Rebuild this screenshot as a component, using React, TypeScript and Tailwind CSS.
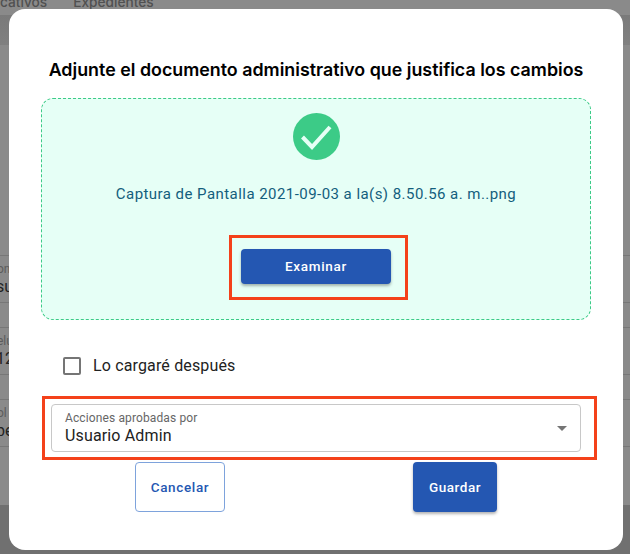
const inter = { fontFamily: 'Inter, sans-serif' };

const rows = [
  { label: 'on', value: 'su' },
  { label: 'elu', value: '12' },
  { label: 'ol', value: 'be' },
];

function BackgroundPage() {
  return (
    <div className="absolute inset-0 bg-[#8a8a8a] font-['Inter',sans-serif]">
      <div className="flex h-[15px] items-start gap-[26px] text-[13.7px] font-medium leading-[15px] text-[#505050]">
        <span className="-mt-[5px]">cativos</span>
        <span className="-mt-[5px]">Expedientes</span>
      </div>
      <div className="h-[30px] bg-gradient-to-b from-[#7a7a7a] to-[#808080]" />
      <div className="mt-[210px] flex flex-col gap-[24px] font-['Roboto',sans-serif]">
        {rows.map((row) => (
          <div key={row.label} className="h-[48px] border-y border-[#777] pt-[6px]">
            <div className="-ml-[3px] text-[12px] leading-[14px] text-[#5c5c5c]">{row.label}</div>
            <div className="-ml-[4px] mt-[2px] text-[16px] leading-[18px] text-[#222]">{row.value}</div>
          </div>
        ))}
      </div>
    </div>
  );
}

export default function App() {
  return (
    <div className="relative h-[554px] w-[630px] overflow-hidden">
      <BackgroundPage />
      <div className="absolute bottom-0 left-0 right-0 h-[49px] bg-[#707070]" />

      {/* Modal */}
      <div className="absolute left-[9px] top-[9px] flex h-[541px] w-[614px] flex-col items-center rounded-[16px] bg-white font-['Roboto',sans-serif]">
        <h2 className="mt-[50px] text-[17.85px] font-semibold leading-[22px] text-black" style={inter}>
          Adjunte el documento administrativo que justifica los cambios
        </h2>

        <div className="mt-[17px] flex h-[222px] w-[550px] flex-col items-center rounded-[12px] border border-dashed border-[#3ccb87] bg-[#e6fff6]">
          <svg className="mt-[14px]" width="47" height="47" viewBox="0 0 47 47">
            <circle cx="23.5" cy="23.5" r="23.5" fill="#3ccb87" />
            <path d="M9.5 24l9.5 10 18-20" fill="none" stroke="#e6fff6" strokeWidth="4" />
          </svg>
          <p className="mt-[24px] text-[15px] leading-[20px] tracking-[0.45px] text-[#135e7d]">
            Captura de Pantalla 2021-09-03 a la(s) 8.50.56 a. m..png
          </p>
          <div className="ml-[5px] mt-[31px] border-[3px] border-[#f4411a] pb-[13px] pl-[9px] pr-[14px] pt-[11px]">
            <button className="h-[35px] w-[150px] rounded-[4px] bg-[#2457b2] text-[13.5px] font-medium tracking-[0.7px] text-white shadow-[0_2px_3px_rgba(0,0,0,0.3)]">
              Examinar
            </button>
          </div>
        </div>

        <label className="mt-[34px] flex w-[550px] items-center gap-[12px] pl-[22px]">
          <span className="h-[18px] w-[18px] rounded-[2px] border-2 border-[#757575]" />
          <span className="text-[16px] leading-[24px] tracking-[0.15px] text-[#222]">Lo cargaré después</span>
        </label>

        <div className="ml-[33px] mt-[18px] w-[555px] self-start border-[3px] border-[#f4411a] pb-[5px] pl-[6px] pr-[13px] pt-[5px]">
          <div className="flex h-[48px] items-center justify-between rounded-[4px] border border-[#c8c8c8] pl-[13px] pr-[13px]">
            <div>
              <div className="text-[12px] leading-[14px] tracking-[0.12px] text-[#666]">Acciones aprobadas por</div>
              <div className="text-[16px] leading-[21px] tracking-[0.15px] text-[#222]">Usuario Admin</div>
            </div>
            <span className="h-0 w-0 border-x-[5px] border-t-[5px] border-x-transparent border-t-[#757575]" />
          </div>
        </div>

        <div className="mt-[2px] flex w-[362px] items-start justify-between">
          <button className="h-[50px] w-[90px] rounded-[4px] border border-[#7ea3dc] bg-white text-[13.5px] font-medium tracking-[0.65px] text-[#2457b2]">
            Cancelar
          </button>
          <button className="h-[50px] w-[84px] rounded-[4px] bg-[#2457b2] text-[13.5px] font-medium tracking-[0.55px] text-white shadow-[0_2px_3px_rgba(0,0,0,0.3)]">
            Guardar
          </button>
        </div>
      </div>
    </div>
  );
}
